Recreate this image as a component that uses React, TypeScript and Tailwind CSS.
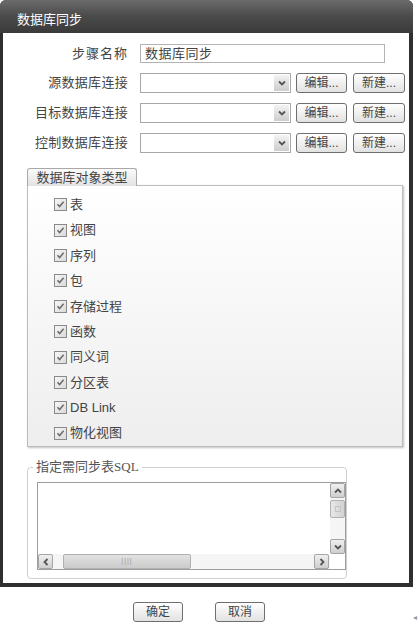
import React from 'react';

const items = ['表', '视图', '序列', '包', '存储过程', '函数', '同义词', '分区表', 'DB Link', '物化视图'];

const Chevron = ({ dir }: { dir: 'up' | 'down' | 'left' | 'right' }) => {
  const d =
    dir === 'down'
      ? 'M2 3.5 L5 6.5 L8 3.5'
      : dir === 'up'
        ? 'M2 6.5 L5 3.5 L8 6.5'
        : dir === 'left'
          ? 'M6.5 2 L3.5 5 L6.5 8'
          : 'M3.5 2 L6.5 5 L3.5 8';
  return (
    <svg width="10" height="10" viewBox="0 0 10 10">
      <path d={d} fill="none" stroke="#555" strokeWidth="1.8" />
    </svg>
  );
};

const Check = () => (
  <span className="flex h-[13px] w-[13px] shrink-0 items-center justify-center border border-[#8a8a8a] bg-linear-to-br from-[#f7f7f7] to-[#dadada]">
    <svg width="9" height="9" viewBox="0 0 9 9">
      <path d="M1.5 4.3 L3.6 6.6 L7.6 1.8" fill="none" stroke="#6b6b6b" strokeWidth="1.5" />
    </svg>
  </span>
);

const Select = () => (
  <div className="flex h-[20px] w-[151px] items-center justify-end border border-[#a8a8a8] bg-white pr-px">
    <span className="flex h-[16px] w-[15px] items-center justify-center bg-linear-to-b from-[#f3f3f3] to-[#cdcdcd]">
      <Chevron dir="down" />
    </span>
  </div>
);

const Btn = ({ children, w = 'w-[51px]' }: { children: React.ReactNode; w?: string }) => (
  <button
    className={`flex h-[20px] ${w} items-center justify-center rounded-[3px] border border-[#6e6e6e] bg-linear-to-b from-white to-[#e2e2e2] text-[12px] text-[#444]`}
  >
    {children}
  </button>
);

const ArrowBox = ({ dir }: { dir: 'up' | 'down' | 'left' | 'right' }) => (
  <span className="flex h-[15px] w-[15px] items-center justify-center rounded-[2px] border border-[#a5a5a5] bg-linear-to-b from-[#f0f0f0] to-[#cfcfcf]">
    <Chevron dir={dir} />
  </span>
);

const ConnRow = ({ label }: { label: string }) => (
  <div className="mt-[10px] flex h-[20px] items-center">
    <div className="w-[125px] text-right text-[13px] tracking-[0.3px] text-[#444]">{label}</div>
    <div className="ml-[12px] flex items-center">
      <Select />
      <div className="ml-[5px]">
        <Btn>编辑...</Btn>
      </div>
      <div className="ml-[6px]">
        <Btn w="w-[52px]">新建...</Btn>
      </div>
    </div>
  </div>
);

export default function App() {
  return (
    <div className="h-[624px] w-[420px] bg-white font-['Liberation_Sans','Noto_Sans_CJK_SC',sans-serif]">
      {/* Window */}
      <div className="w-[413px] rounded-t-[6px] bg-[#2f2f2f] pb-[4px] pl-[3px] pr-[4px]">
        <div className="-ml-[3px] -mr-[4px] flex h-[33px] items-center rounded-t-[6px] bg-linear-to-b from-[#6b6b6b] via-[#4a4a4a] to-[#3a3a3a] pl-[17px] pt-[6px] text-[13px] text-white">
          数据库同步
        </div>

        <div className="h-[550px] bg-white pt-[11px]">
          {/* Step name */}
          <div className="flex h-[19px] items-center">
            <div className="w-[125px] text-right text-[13px] tracking-[1px] text-[#444]">步骤名称</div>
            <div className="ml-[12px] flex h-[19px] w-[245px] items-center border border-[#b3b3b3] px-[4px] text-[13px] tracking-[0.5px] text-[#444]">
              数据库同步
            </div>
          </div>

          <ConnRow label="源数据库连接" />
          <ConnRow label="目标数据库连接" />
          <ConnRow label="控制数据库连接" />

          {/* Object types */}
          <div className="ml-[24px] mt-[15px] w-[376px]">
            <div className="relative z-10 -mb-px flex h-[18px] w-[110px] items-center justify-center rounded-t-[3px] border border-b-0 border-[#a8a8a8] bg-linear-to-b from-[#fbfbfb] to-[#e2e2e2] text-[13px] text-[#444]">
              数据库对象类型
            </div>
            <div className="h-[262px] border border-[#bcbcbc] bg-linear-to-b from-white to-[#eeeeee] pl-[26px] pt-[6px] shadow-[1px_1px_2px_rgba(0,0,0,0.25)]">
              {items.map((it) => (
                <div key={it} className="flex h-[25.4px] items-center gap-[3px] text-[13px] text-[#444]">
                  <Check />
                  <span>{it}</span>
                </div>
              ))}
            </div>
          </div>

          {/* SQL */}
          <fieldset className="ml-[24px] mt-[12px] h-[120px] w-[315px] rounded-[4px] border border-[#cfcfcf] pl-[9px] pt-[7px]">
            <legend className="-ml-[4px] px-[3px] text-[13px] leading-[16px] text-[#555]">
              指定需同步表<span className="font-['Liberation_Serif',serif]">SQL</span>
            </legend>
            <div className="flex h-[88px] w-[309px] flex-col border border-[#9d9d9d] bg-white">
              <div className="flex flex-1">
                <div className="flex-1" />
                <div className="flex w-[15px] flex-col bg-[#f5f5f5]">
                  <ArrowBox dir="up" />
                  <span className="mt-[2px] flex h-[18px] w-[15px] items-center justify-center rounded-[2px] border border-[#b0b0b0] bg-linear-to-r from-[#e8e8e8] to-[#d2d2d2]">
                    <span className="h-[6px] w-[6px] border border-[#c4c4c4]" />
                  </span>
                  <div className="flex-1" />
                  <ArrowBox dir="down" />
                </div>
              </div>
              <div className="flex h-[15px]">
                <div className="flex flex-1 items-center bg-[#f5f5f5]">
                  <ArrowBox dir="left" />
                  <span className="ml-[10px] flex h-[15px] w-[128px] items-center justify-center rounded-[2px] border border-[#b0b0b0] bg-linear-to-b from-[#e2e2e2] to-[#cbcbcb] text-[7px] tracking-[1px] text-[#999]">
                    ||||
                  </span>
                  <div className="flex-1" />
                  <ArrowBox dir="right" />
                  <div className="w-[1px]" />
                </div>
                <div className="w-[15px] bg-white" />
              </div>
            </div>
          </fieldset>
        </div>
      </div>

      {/* Footer buttons */}
      <div className="flex items-center pt-[13px]">
        <div className="ml-[133px]">
          <Btn w="w-[50px]">确定</Btn>
        </div>
        <div className="ml-[32px]">
          <Btn w="w-[50px]">取消</Btn>
        </div>
        <span className="ml-[148px] mt-[12px] text-[8px] text-[#999]">◂</span>
      </div>
    </div>
  );
}
